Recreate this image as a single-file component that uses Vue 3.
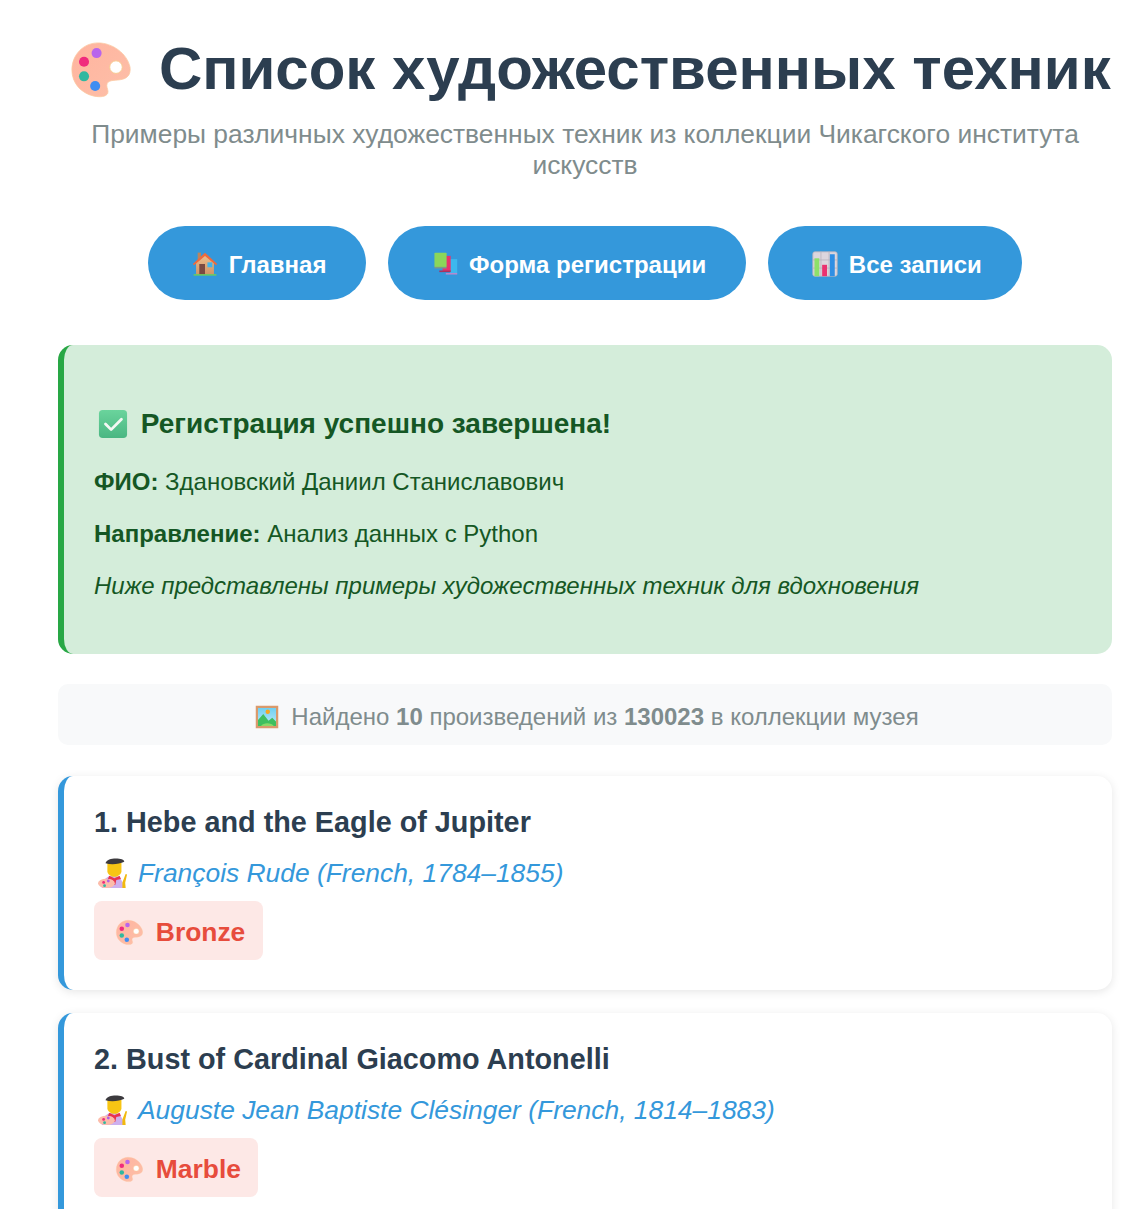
<script setup>
const works = [
  {
    id: 1,
    title: "Hebe and the Eagle of Jupiter",
    artist: "François Rude (French, 1784–1855)",
    technique: "Bronze",
  },
  {
    id: 2,
    title: "Bust of Cardinal Giacomo Antonelli",
    artist: "Auguste Jean Baptiste Clésinger (French, 1814–1883)",
    technique: "Marble",
  },
];
</script>

<template>
  <svg class="defs" width="0" height="0" aria-hidden="true">
    <defs>
      <linearGradient id="pal" x1="0" y1="0" x2="1" y2="1">
        <stop offset="0" stop-color="#ffb49f" />
        <stop offset="1" stop-color="#fdbfa8" />
      </linearGradient>
      <linearGradient id="wall" x1="0" y1="0" x2="0" y2="1">
        <stop offset="0" stop-color="#eec08e" />
        <stop offset="1" stop-color="#cf9467" />
      </linearGradient>
      <linearGradient id="check" x1="0" y1="0" x2="0" y2="1">
        <stop offset="0" stop-color="#6ad49c" />
        <stop offset="1" stop-color="#4ab682" />
      </linearGradient>
      <linearGradient id="sky" x1="0" y1="0" x2="0" y2="1">
        <stop offset="0" stop-color="#6fd0f2" />
        <stop offset="1" stop-color="#bfe9f7" />
      </linearGradient>
      <symbol id="e-palette" viewBox="0 0 64 64">
        <path
          d="M3 31C3 15 15 3 30 3c15 0 30 11 33 25 1 8-3 12-10 13-7 1-14 0-14 6 0 3 2 5 1 8-2 4-8 4-14 3C12 55 3 44 3 31z"
          fill="url(#pal)"
          stroke="#fbc8a0"
          stroke-width="0.8"
        />
        <circle cx="48.500" cy="28" r="6.500" fill="#fff" stroke="#f7c98e" stroke-width="1" />
        <circle cx="28.500" cy="13.500" r="5.200" fill="#b964ec" />
        <circle cx="15.500" cy="22.500" r="5.200" fill="#f02b7d" />
        <circle cx="15.500" cy="37.500" r="5.200" fill="#2fb8a0" />
        <circle cx="27" cy="47.500" r="5.200" fill="#3f8df2" />
      </symbol>
      <symbol id="e-house" viewBox="0 0 32 32">
        <rect x="7" y="2" width="4" height="9" fill="#b98560" />
        <path d="M5 14 16 4l11 10v15H5z" fill="url(#wall)" />
        <path d="M1 16 16 2l15 14-1.500 1.500L16 6 2.500 17.500z" fill="#ee6a3c" />
        <rect x="9" y="16" width="7" height="13" fill="#7a4a42" />
        <rect x="19" y="14" width="6" height="6" fill="#3fb5ee" />
        <rect x="2" y="28.500" width="28" height="1.800" fill="#6ccf5a" />
      </symbol>
      <symbol id="e-books" viewBox="0 0 32 32">
        <rect x="22" y="10" width="9" height="18" fill="#3db8ee" />
        <rect x="17" y="27" width="14" height="2" fill="#b48ad0" />
        <rect x="13" y="6" width="10" height="19" fill="#e8336d" />
        <rect x="9" y="24" width="14" height="2" fill="#a8325e" />
        <rect x="3" y="2" width="15" height="18" rx="1" fill="#8bd65a" />
        <rect x="3" y="19.500" width="15" height="2" fill="#7d9a88" />
      </symbol>
      <symbol id="e-chart" viewBox="0 0 32 32">
        <rect x="1" y="1" width="30" height="30" rx="2.500" fill="#dcd6de" stroke="#b9b3bd" />
        <path d="M11 1v30M21 1v30M1 11h30M1 21h30" stroke="#b9b3bd" stroke-width="1" />
        <rect x="3" y="9" width="6" height="22" fill="#8de06a" />
        <rect x="12.500" y="17" width="6" height="14" fill="#ea3170" />
        <rect x="22" y="4" width="6" height="27" fill="#2f8fe4" />
      </symbol>
      <symbol id="e-check" viewBox="0 0 32 32">
        <rect x="1" y="1" width="30" height="30" rx="4" fill="url(#check)" />
        <path d="m8 16 6 6 11-11" fill="none" stroke="#f4f8f4" stroke-width="3" stroke-linecap="round" stroke-linejoin="round" />
      </symbol>
      <symbol id="e-picture" viewBox="0 0 32 32">
        <rect x="1" y="1" width="30" height="30" fill="#d99a6c" />
        <rect x="4" y="4" width="24" height="24" fill="url(#sky)" />
        <circle cx="17" cy="9" r="3" fill="#f5a623" />
        <path d="M4 20 11 12l7 9 5-4 5 5v6H4z" fill="#3fbf5f" />
        <path d="M8 28c3-5 14-5 17 0z" fill="#8ad86a" />
      </symbol>
      <symbol id="e-artist" viewBox="0 0 32 32">
        <path d="M4 32c0-8 5-13 12-13s11 5 11 13z" fill="#cdb0ee" />
        <path d="M26 32v-6l3.500-9 1.500.5-2 9 .5 5.500z" fill="#f2b90f" />
        <path d="M10 5h15v9c0 3-3.500 6-7.500 6S10 17 10 14z" fill="#f7c514" />
        <path d="M8 5.500C9 2 14 .5 19 .5s9 1 9 3.500c-5 2.500-14 3.500-20 1.500z" fill="#3c3a3e" />
        <path d="M12 19l5.500 2.500L23 19l1.500 3.500-5 1-1 5h-2l-1-5-5-1z" fill="#e8334f" />
        <ellipse cx="9" cy="27" rx="9" ry="5" fill="#fcbcaa" />
        <circle cx="6" cy="26" r="1.500" fill="#ee2c7c" />
        <circle cx="11" cy="24.500" r="1.500" fill="#b05ee8" />
        <circle cx="7" cy="29.500" r="1.500" fill="#2fb8a0" />
      </symbol>
    </defs>
  </svg>

  <main class="page">
    <header class="head">
      <h1 class="title">
        <svg class="emoji-title"><use href="#e-palette" /></svg>
        Список художественных техник
      </h1>
      <p class="subtitle">
        Примеры различных художественных техник из коллекции Чикагского института искусств
      </p>
    </header>

    <nav class="nav">
      <a class="btn" href="#">
        <svg class="emoji"><use href="#e-house" /></svg>
        Главная
      </a>
      <a class="btn" href="#">
        <svg class="emoji"><use href="#e-books" /></svg>
        Форма регистрации
      </a>
      <a class="btn" href="#">
        <svg class="emoji"><use href="#e-chart" /></svg>
        Все записи
      </a>
    </nav>

    <section class="success">
      <h2 class="success-title">
        <svg class="emoji-check"><use href="#e-check" /></svg>
        Регистрация успешно завершена!
      </h2>
      <p><strong>ФИО:</strong> Здановский Даниил Станиславович</p>
      <p><strong>Направление:</strong> Анализ данных с Python</p>
      <p><em>Ниже представлены примеры художественных техник для вдохновения</em></p>
    </section>

    <div class="found">
      <svg class="emoji-found"><use href="#e-picture" /></svg>
      <span>Найдено <b>10</b> произведений из <b>130023</b> в коллекции музея</span>
    </div>

    <article v-for="work in works" :key="work.id" class="card">
      <h3 class="card-title">{{ work.id }}. {{ work.title }}</h3>
      <p class="artist">
        <svg class="emoji-artist"><use href="#e-artist" /></svg>
        <em>{{ work.artist }}</em>
      </p>
      <span class="tag">
        <svg class="emoji-tag"><use href="#e-palette" /></svg>
        {{ work.technique }}
      </span>
    </article>
  </main>
</template>

<style scoped>
.defs {
  position: absolute;
}

.page {
  width: 1054px;
  margin-left: 58px;
  font-family: "Liberation Sans", Arial, sans-serif;
}

.head {
  padding-top: 33px;
  text-align: center;
}

.title {
  margin: 0;
  height: 72px;
  font-size: 60px;
  line-height: 72px;
  font-weight: 700;
  color: #2c3e50;
  white-space: nowrap;
}

.emoji-title {
  width: 62px;
  height: 62px;
  margin: 0 11px 0 10px;
  vertical-align: -13px;
}

.subtitle {
  margin: 14px 0 0;
  font-size: 26.4px;
  line-height: 31px;
  color: #7f8c8d;
}

.nav {
  display: flex;
  justify-content: center;
  gap: 22px;
  margin-top: 45px;
}

.btn {
  display: block;
  height: 74px;
  box-sizing: border-box;
  padding: 25px 40px 0 44px;
  border-radius: 37px;
  background: #3498db;
  color: #fff;
  font-size: 24px;
  line-height: 26px;
  font-weight: 700;
  text-decoration: none;
}

.emoji {
  width: 26px;
  height: 26px;
  margin-right: 4px;
  vertical-align: -4px;
}

.success {
  margin-top: 45px;
  height: 309px;
  box-sizing: border-box;
  padding: 61px 30px 0;
  border-left: 6px solid #28a745;
  border-radius: 15px;
  background: #d4edda;
  color: #155724;
  font-size: 24px;
}

.success-title {
  margin: 0;
  font-size: 28px;
  line-height: 36px;
  font-weight: 700;
}

.emoji-check {
  width: 30px;
  height: 30px;
  margin: 0 5px 0 4px;
  vertical-align: -6px;
}

.success p {
  margin: 25px 0 0;
  line-height: 27px;
}

.success-title + p {
  margin-top: 26px;
}

.found {
  display: flex;
  align-items: center;
  justify-content: center;
  gap: 12px;
  margin-top: 30px;
  height: 61px;
  padding: 5px 0 0 4px;
  box-sizing: border-box;
  border-radius: 10px;
  background: #f8f9fa;
  color: #7f8c8d;
  font-size: 24px;
}

.emoji-found {
  width: 24px;
  height: 24px;
}

.card {
  margin-top: 31px;
  height: 214px;
  box-sizing: border-box;
  padding: 30px 30px 0;
  border-left: 6px solid #3498db;
  border-radius: 15px;
  background: #fff;
  box-shadow: 0 2px 10px rgba(0, 0, 0, 0.1);
}

.card + .card {
  margin-top: 23px;
}

.card-title {
  margin: 0;
  font-size: 28.8px;
  line-height: 33px;
  font-weight: 700;
  color: #2c3e50;
}

.artist {
  margin: 19px 0 0;
  height: 30px;
  font-size: 26.4px;
  line-height: 30px;
  color: #3498db;
}

.emoji-artist {
  width: 30px;
  height: 30px;
  margin: 0 10px 0 4px;
  vertical-align: -6px;
}

.tag {
  display: inline-block;
  margin-top: 13px;
  padding: 17px 17.5px 13px 19px;
  border-radius: 8px;
  background: #fde8e6;
  color: #e74c3c;
  font-size: 26.4px;
  line-height: 29px;
  font-weight: 700;
}

.emoji-tag {
  width: 28px;
  height: 28px;
  margin: 0 5.5px 0 2px;
  vertical-align: -6px;
}
</style>

<style>
html,
body {
  overflow: hidden;
  background: #fff;
}
</style>
